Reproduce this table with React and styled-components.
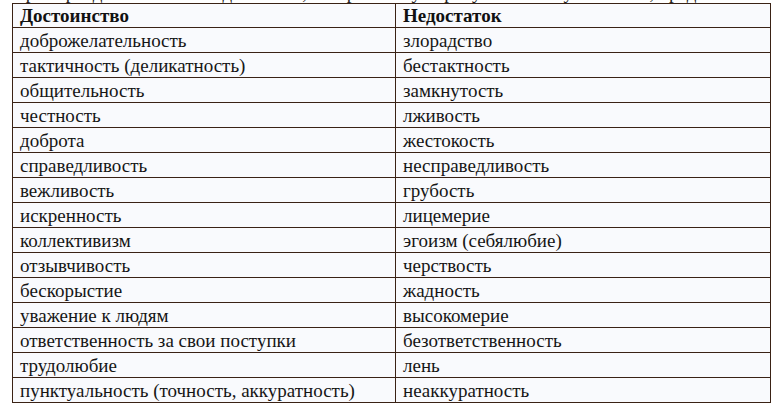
import React from "react";
import styled, { createGlobalStyle } from "styled-components";

const Global = createGlobalStyle`
  html, body {
    margin: 0;
    padding: 0;
    background: #ffffff;
    font-family: "Times New Roman", "Liberation Serif", Tinos, serif;
  }
`;

const Page = styled.div`
  width: 773px;
  height: 406px;
  overflow: hidden;
  padding-left: 12px;
  box-sizing: border-box;
  font-family: "Times New Roman", "Liberation Serif", Tinos, serif;
`;

const Caption = styled.div`
  height: 3px;
  overflow: hidden;
  font-family: "Times New Roman", "Liberation Serif", Tinos, serif;
  font-size: 19px;
  line-height: 21px;
  color: #222;
  white-space: nowrap;
  display: flex;
  align-items: flex-end;
`;

const CaptionText = styled.span`
  display: block;
  flex: none;
  height: 21px;
  font-family: inherit;
`;

const Grid = styled.div`
  display: grid;
  grid-template-columns: 383px 375px;
  width: 759px;
  box-sizing: border-box;
  border-left: 1px solid #3a2215;
  border-top: 1px solid #3a2215;
  background: #f9fafd;
  font-family: "Times New Roman", "Liberation Serif", Tinos, serif;
`;

const Cell = styled.div`
  box-sizing: border-box;
  height: ${(p) => (p.$head ? 24 : 25)}px;
  border-right: 1px solid #3a2215;
  border-bottom: 1px solid #3a2215;
  padding: 0 7px;
  display: flex;
  align-items: center;
  font-family: "Times New Roman", "Liberation Serif", Tinos, serif;
  font-size: 19px;
  font-weight: ${(p) => (p.$head ? 700 : 400)};
  line-height: 21px;
  white-space: nowrap;
  color: ${(p) => (p.$head ? "#111" : "#161616")};
`;

const rows = [
  ["доброжелательность", "злорадство"],
  ["тактичность (деликатность)", "бестактность"],
  ["общительность", "замкнутость"],
  ["честность", "лживость"],
  ["доброта", "жестокость"],
  ["справедливость", "несправедливость"],
  ["вежливость", "грубость"],
  ["искренность", "лицемерие"],
  ["коллективизм", "эгоизм (себялюбие)"],
  ["отзывчивость", "черствость"],
  ["бескорыстие", "жадность"],
  ["уважение к людям", "высокомерие"],
  ["ответственность за свои поступки", "безответственность"],
  ["трудолюбие", "лень"],
  ["пунктуальность (точность, аккуратность)", "неаккуратность"],
];

export default function App() {
  return (
    <>
      <Global />
      <Page>
        <Caption>
          <CaptionText>
            Примеры достоинств и недостатков, которые могут присутствовать у человека, представлены в таблице:
          </CaptionText>
        </Caption>
        <Grid>
          <Cell $head>Достоинство</Cell>
          <Cell $head>Недостаток</Cell>
          {rows.map(([a, b]) => (
            <React.Fragment key={a}>
              <Cell>{a}</Cell>
              <Cell>{b}</Cell>
            </React.Fragment>
          ))}
        </Grid>
      </Page>
    </>
  );
}
